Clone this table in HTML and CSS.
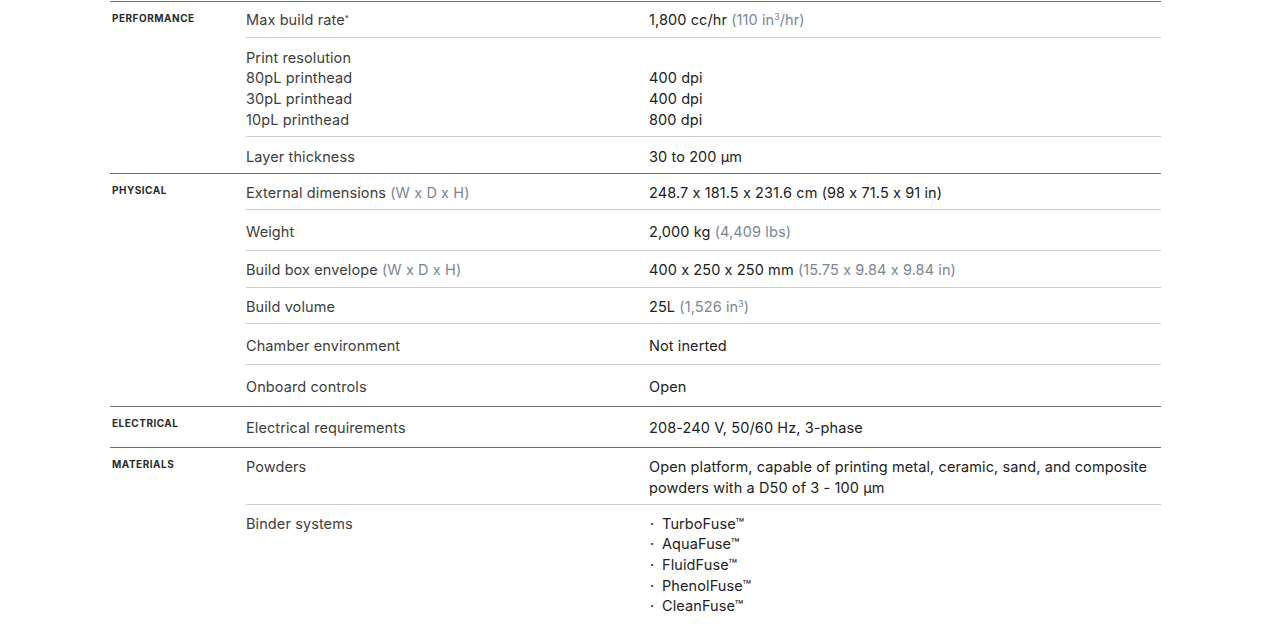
FILE: index.html
```html
<!DOCTYPE html>
<html lang="en">
<head>
<meta charset="utf-8">
<title>Specifications</title>
<link rel="stylesheet" href="styles.css">
</head>
<body>
<div class="specs">
  <section class="group">
    <h3 class="cat">Performance</h3>
    <div class="rows">
      <div class="row row--first">
        <div class="label">Max build rate<sup class="ast">*</sup></div>
        <div class="value">1,800 cc/hr <span class="muted">(110 in<sup>3</sup>/hr)</span></div>
      </div>
      <div class="row row--loose">
        <div class="label">Print resolution<br>80pL printhead<br>30pL printhead<br>10pL printhead</div>
        <div class="value"><br>400 dpi<br>400 dpi<br>800 dpi</div>
      </div>
      <div class="row row--loose row--end">
        <div class="label">Layer thickness</div>
        <div class="value">30 to 200 µm</div>
      </div>
    </div>
  </section>
  <section class="group">
    <h3 class="cat">Physical</h3>
    <div class="rows">
      <div class="row">
        <div class="label">External dimensions <span class="muted">(W x D x H)</span></div>
        <div class="value">248.7 x 181.5 x 231.6 cm (98 x 71.5 x 91 in)</div>
      </div>
      <div class="row row--tall">
        <div class="label">Weight</div>
        <div class="value">2,000 kg <span class="muted">(4,409 lbs)</span></div>
      </div>
      <div class="row row--mid">
        <div class="label">Build box envelope <span class="muted">(W x D x H)</span></div>
        <div class="value">400 x 250 x 250 mm <span class="muted">(15.75 x 9.84 x 9.84 in)</span></div>
      </div>
      <div class="row">
        <div class="label">Build volume</div>
        <div class="value">25L <span class="muted">(1,526 in<sup>3</sup>)</span></div>
      </div>
      <div class="row row--tall">
        <div class="label">Chamber environment</div>
        <div class="value">Not inerted</div>
      </div>
      <div class="row row--taller">
        <div class="label">Onboard controls</div>
        <div class="value">Open</div>
      </div>
    </div>
  </section>
  <section class="group">
    <h3 class="cat">Electrical</h3>
    <div class="rows">
      <div class="row row--even">
        <div class="label">Electrical requirements</div>
        <div class="value">208-240 V, 50/60 Hz, 3-phase</div>
      </div>
    </div>
  </section>
  <section class="group">
    <h3 class="cat">Materials</h3>
    <div class="rows">
      <div class="row">
        <div class="label">Powders</div>
        <div class="value">Open platform, capable of printing metal, ceramic, sand, and composite powders with a D50 of 3 - 100 µm</div>
      </div>
      <div class="row">
        <div class="label">Binder systems</div>
        <ul class="value bullets">
          <li>TurboFuse™</li>
          <li>AquaFuse™</li>
          <li>FluidFuse™</li>
          <li>PhenolFuse™</li>
          <li>CleanFuse™</li>
        </ul>
      </div>
    </div>
  </section>
</div>
</body>
</html>
```

FILE: styles.css
```css
* { box-sizing: border-box; }
html, body { margin: 0; padding: 0; background: #fff; }
body {
  font-family: Inter, "Noto Sans", sans-serif;
  font-size: 14.5px;
  line-height: 20.7px;
  letter-spacing: 0.1px;
  font-feature-settings: "calt" 0;
  color: #333;
}
.specs {
  width: 1051px;
  margin: 1px 0 0 110px;
}
.group {
  display: grid;
  grid-template-columns: 136px 1fr;
  border-top: 1.5px solid #6e6e6e;
}
.cat {
  margin: 0;
  padding: 9.5px 0 0 2px;
  font-size: 10px;
  line-height: 12px;
  font-weight: 700;
  letter-spacing: 0.05em;
  text-transform: uppercase;
  color: #2b2b2b;
}
.rows { display: flex; flex-direction: column; }
.row {
  display: grid;
  grid-template-columns: 403px 1fr;
  padding: 9px 0 5px;
  border-top: 1.5px solid #ccd0d4;
}
.row:first-child { border-top: none; }
.row--first { padding: 8px 0 6px; }
.row--loose { padding: 10px 0 5px; }
.row--loose.row--end { padding-bottom: 6px; }
.row--mid { padding: 9px 0 7px; }
.row--tall { padding: 12px 0 7px; }
.row--taller { padding: 12px 0 9px; }
.row--even { padding: 11px 0 8px; }
.label { color: #3d3d3d; }
.value { color: #222; padding-right: 10px; }
.muted { color: #7b8794; }
sup { font-size: 0.6em; line-height: 0; vertical-align: 0.55em; }
.ast { font-size: 0.55em; }
.bullets { list-style: none; margin: 0; padding: 0 0 0 1px; }
.bullets li { display: flex; }
.bullets li::before {
  content: "·";
  width: 12px;
  flex: none;
}
```
